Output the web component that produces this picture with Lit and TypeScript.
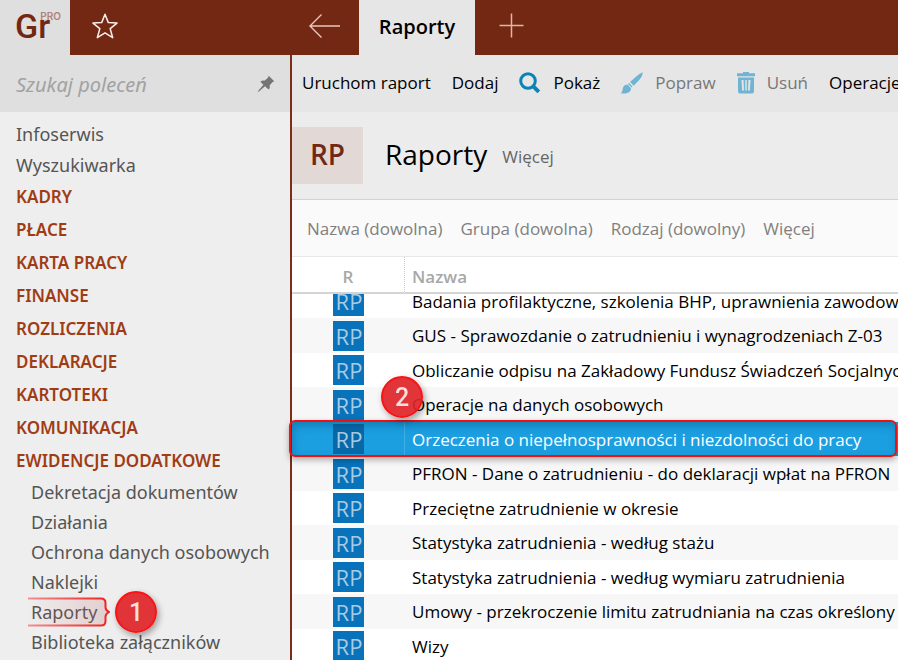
import { LitElement, html, css, svg } from "lit";
import { customElement } from "lit/decorators.js";
import { classMap } from "lit/directives/class-map.js";

const star = svg`<svg width="26" height="26" viewBox="0 0 26 26" fill="none" stroke="#fbeee9" stroke-width="1.5" stroke-linejoin="round"><path d="M13 1.3l3.3 8.3 8.7.5-6.8 5.6 2.5 9L13 19.8l-7.7 4.9 2.5-9L1 10.1l8.7-.5z"/></svg>`;
const back = svg`<svg width="32" height="26" viewBox="0 0 32 26" fill="none" stroke="#eac6bd" stroke-width="1.4"><path d="M31 13H1M12.500 1.500L1 13l11.500 11.500"/></svg>`;
const plus = svg`<svg width="25" height="25" viewBox="0 0 25 25" fill="none" stroke="#e0b5aa" stroke-width="1.500"><path d="M12.500 .5v24M.5 12.500h24"/></svg>`;
const pin = svg`<svg width="18" height="18" viewBox="0 0 18 18" fill="#757575"><path d="M11.700 .8L17.200 6.300 15.700 6.900 12.700 10.200Q13.400 13 11.600 14.500L8 11.200 2.200 16.300.6 17.200 1.500 15.600 6.400 9.700 3.400 6.700Q5.200 5 7.900 5.500L11.100 2.400z"/></svg>`;
const search = svg`<svg width="22" height="22" viewBox="0 0 22 22" fill="none" stroke="#0a84b8"><circle cx="9" cy="9" r="7.300" stroke-width="3"/><path d="M14.300 14.300L19.800 19.800" stroke-width="4"/></svg>`;
const brush = svg`<svg width="22" height="22" viewBox="0 0 22 22" fill="#6fb4d2"><path d="M21.500 .2Q22.200 3.600 18 8.200L12.700 13.700 9.100 10.100 14.600 5Q18.800 1.200 21.500.2zM8.100 11L11.500 14.400 10.600 15.500 7 12zM6.300 12.500L9.800 15.900Q10.600 18.900 7.500 20.400 4.600 21.700 0 21.600 1.500 19.500 1.700 17 2.200 12.800 6.300 12.500z"/></svg>`;
const bin = svg`<svg width="18" height="22" viewBox="0 0 18 22" fill="#6fb4d2"><path d="M0 1.300h6V0h6v1.300h6v3H0zM1 5.600h16V19q0 2.600-2.600 2.600H3.600Q1 21.600 1 19z"/><path fill="#e6e6e6" d="M4.500 8h2l.5 10.500H5.200zM8.300 8h1.400v10.500H8.300zM11.500 8h2l-.7 10.500H11z"/></svg>`;
const brace = svg`<svg width="82" height="30" viewBox="0 0 82 30" fill="none"><defs><linearGradient id="line"><stop offset="0" stop-color="#f02020" stop-opacity=".45"/><stop offset="1" stop-color="#f02020"/></linearGradient><linearGradient id="wash"><stop offset="0" stop-color="#d85050" stop-opacity="0"/><stop offset="1" stop-color="#b06060" stop-opacity=".22"/></linearGradient></defs><path fill="url(#wash)" stroke="url(#line)" stroke-width="2" d="M0 1.500H73Q77.500 1.500 77.500 6V10.500Q77.500 13 81 15 77.500 17 77.500 19.500V24Q77.500 28.500 73 28.500H0"/></svg>`;

const commands = [
  { label: "Uruchom raport" },
  { label: "Dodaj" },
  { label: "Pokaż", icon: search },
  { label: "Popraw", icon: brush, disabled: true },
  { label: "Usuń", icon: bin, disabled: true },
  { label: "Operacje" },
];
const sections = ["KADRY", "PŁACE", "KARTA PRACY", "FINANSE", "ROZLICZENIA", "DEKLARACJE", "KARTOTEKI", "KOMUNIKACJA", "EWIDENCJE DODATKOWE"];
const records = ["Dekretacja dokumentów", "Działania", "Ochrona danych osobowych", "Naklejki", "Raporty", "Biblioteka załączników"];
const filters = ["Nazwa (dowolna)", "Grupa (dowolna)", "Rodzaj (dowolny)", "Więcej"];
const reports = [
  "Badania profilaktyczne, szkolenia BHP, uprawnienia zawodowe",
  "GUS - Sprawozdanie o zatrudnieniu i wynagrodzeniach Z-03",
  "Obliczanie odpisu na Zakładowy Fundusz Świadczeń Socjalnych",
  "Operacje na danych osobowych",
  "Orzeczenia o niepełnosprawności i niezdolności do pracy",
  "PFRON - Dane o zatrudnieniu - do deklaracji wpłat na PFRON",
  "Przeciętne zatrudnienie w okresie",
  "Statystyka zatrudnienia - według stażu",
  "Statystyka zatrudnienia - według wymiaru zatrudnienia",
  "Umowy - przekroczenie limitu zatrudniania na czas określony",
  "Wizy",
];

@customElement("side-nav")
class SideNav extends LitElement {
  static styles = css`
    :host { display: flex; flex-direction: column; box-sizing: border-box; background: #eee; border-right: 2px solid #7a2e18; overflow: hidden; font-family: "Noto Sans", "Open Sans", sans-serif; }
    .search { display: flex; align-items: center; flex: none; height: 57px; padding: 0 15px 0 16px; background: #dfdfdf; }
    .box { flex: 1; min-width: 0; border: 0; padding: 2px 0 0; outline: 0; background: none; color: #444; font: italic 20px "Noto Sans", sans-serif; }
    .box::placeholder { color: #a2a2a2; opacity: 1; }
    .pin { display: flex; border: 0; padding: 0; background: none; }
    .menu { padding-top: 6px; }
    .item { display: flex; align-items: center; height: 31px; padding-left: 16px; color: #555; font-size: 18px; text-decoration: none; white-space: nowrap; }
    .section { height: 33px; color: #a03c14; font-size: 17px; font-weight: 600; }
    .record { height: 30px; padding-left: 31px; }
    .wrap { position: relative; }
    .brace { position: absolute; left: 28px; top: 0; display: flex; pointer-events: none; }
    .badge { position: absolute; left: 115px; top: -6px; }
  `;
  render() {
    return html`
      <div class="search">
        <input class="box" type="search" aria-label="Szukaj poleceń" placeholder="Szukaj poleceń" />
        <button class="pin" aria-label="Przypnij">${pin}</button>
      </div>
      <nav class="menu">
        <a class="item" href="#">Infoserwis</a>
        <a class="item" href="#">Wyszukiwarka</a>
        ${sections.map((s) => html`<a class="item section" href="#">${s}</a>`)}
        ${records.map((r) => html`<div class="wrap">
          ${r === "Raporty" ? html`<span class="brace">${brace}</span><step-badge class="badge">1</step-badge>` : ""}
          <a class="item record" href="#">${r}</a>
        </div>`)}
      </nav>`;
  }
}

@customElement("step-badge")
class StepBadge extends LitElement {
  static styles = css`
    :host { display: flex; align-items: center; justify-content: center; box-sizing: border-box; width: 42px; height: 42px; border: 2px solid #f81414; border-radius: 50%; background: rgba(222, 36, 40, .92); color: #f8dede; font: 500 25px Roboto, sans-serif; box-shadow: 2px 3px 6px rgba(0, 0, 0, .35); z-index: 3; }
  `;
  render() {
    return html`<slot></slot>`;
  }
}

@customElement("report-list")
class ReportList extends LitElement {
  static styles = css`
    :host { display: block; overflow: hidden; background: #fff; }
    .list { width: 100%; table-layout: fixed; border-collapse: separate; border-spacing: 0; }
    .head { position: sticky; top: 0; z-index: 1; height: 37px; box-sizing: border-box; padding: 3px 0 0; background: #fff; border-bottom: 2px solid #d4d4d4; color: #a8a8a8; font-size: 17px; font-weight: 600; }
    .kind { width: 112px; text-align: center; }
    .title { text-align: left; padding-left: 7px; border-left: 1px dotted #ccc; }
    .cell { height: 34px; padding: 0; white-space: nowrap; overflow: hidden; font-size: 17px; color: #000; }
    .even .cell { height: 35px; background: #f7f7f7; }
    .name { padding-left: 8px; }
    .selected .cell { background: #1b9fe1; color: #fff; }
    .selected .name { box-shadow: inset 1px 0 #43afe7; }
    .tile { display: flex; align-items: center; justify-content: center; box-sizing: border-box; width: 31px; height: 30px; margin: 0 auto; padding: 0 0 0 2px; overflow: hidden; background: #0873ba; color: #a9cbe3; font-size: 22px; line-height: 30px; }
    .selected .tile { background: #0869a8; }
  `;
  firstUpdated() {
    this.scrollTop = 10;
  }
  render() {
    return html`<table class="list">
      <thead><tr><th class="head kind">R</th><th class="head title">Nazwa</th></tr></thead>
      <tbody>${reports.map((name, i) => html`
        <tr class=${classMap({ even: i % 2 === 1, selected: i === 4 })}>
          <td class="cell"><div class="tile">RP</div></td>
          <td class="cell name">${name}</td>
        </tr>`)}</tbody>
    </table>`;
  }
}

@customElement("app-root")
class AppRoot extends LitElement {
  static styles = css`
    :host { display: flex; flex-direction: column; height: 100vh; overflow: hidden; font-family: "Open Sans", "Noto Sans", sans-serif; background: #fff; }
    button { border: 0; padding: 0; background: none; font: inherit; color: inherit; white-space: nowrap; }
    .top { display: flex; flex: none; height: 55px; background: #722812; }
    .logo { display: flex; flex: none; box-sizing: border-box; width: 70px; padding-left: 15px; background: #dfdfdf; color: #722812; }
    .mark { font: 500 34px/53px Roboto, sans-serif; }
    .edition { margin-left: -10px; padding-top: 10px; font: 600 10px/12px Inter, sans-serif; color: #b08377; }
    .tools { display: flex; flex: none; justify-content: space-between; align-items: center; box-sizing: border-box; width: 289px; padding: 0 18px 3px 22px; }
    .tools button, .add { display: flex; align-items: center; }
    .tab { width: 116px; padding-bottom: 3px; background: #e6e6e6; color: #000; font-size: 20px; font-weight: 600; }
    .add { margin-left: 24px; padding-bottom: 4px; }
    .body { display: grid; grid-template-columns: 292px minmax(0, 1fr); flex: 1; min-height: 0; }
    .main { position: relative; display: flex; flex-direction: column; min-width: 0; min-height: 0; }
    .commands { display: flex; flex: none; align-items: center; gap: 21px; box-sizing: border-box; height: 57px; padding: 0 0 2px 10px; overflow: hidden; background: #e6e6e6; font-size: 17px; }
    .command { display: flex; flex: none; align-items: center; gap: 12px; color: #000; }
    .command:disabled { color: #777; }
    .heading { display: flex; flex: none; align-items: center; height: 87px; background: #ececec; border-bottom: 1px solid #d2d2d2; }
    .code { width: 71px; height: 57px; background: #e2d9d7; color: #722812; font-size: 28px; font-weight: 600; line-height: 54px; text-align: center; }
    .name { margin: 0 15px 0 22px; padding-bottom: 4px; font-size: 28px; font-weight: 400; }
    .more { padding-top: 2px; color: #666; font-size: 17px; }
    .filters { display: flex; flex: none; align-items: center; gap: 18px; height: 56px; padding-left: 15px; background: #fafafa; border-bottom: 1px solid #e8e8e8; color: #808080; font-size: 17px; }
    .list { flex: 1; min-height: 0; }
    .frame { position: absolute; left: -3px; right: 1px; top: 365px; height: 37px; box-sizing: border-box; border: 2px solid #ee1111; border-radius: 6px; box-shadow: 0 3px 6px rgba(0, 0, 0, .3), inset 2px 4px 8px rgba(0, 50, 90, .3); pointer-events: none; z-index: 2; }
    .badge { position: absolute; left: 89px; top: 321px; }
  `;
  render() {
    return html`
      <header class="top">
        <div class="logo"><span class="mark">Gr</span><span class="edition">PRO</span></div>
        <div class="tools">
          <button aria-label="Ulubione">${star}</button>
          <button aria-label="Wstecz">${back}</button>
        </div>
        <button class="tab">Raporty</button>
        <button class="add" aria-label="Nowa karta">${plus}</button>
      </header>
      <div class="body">
        <side-nav></side-nav>
        <main class="main">
          <div class="commands">
            ${commands.map((c) => html`<button class="command" ?disabled=${c.disabled}>${c.icon ?? ""}${c.label}</button>`)}
          </div>
          <div class="heading">
            <div class="code">RP</div>
            <h1 class="name">Raporty</h1>
            <button class="more">Więcej</button>
          </div>
          <div class="filters">${filters.map((f) => html`<button>${f}</button>`)}</div>
          <report-list class="list"></report-list>
          <div class="frame"></div>
          <step-badge class="badge">2</step-badge>
        </main>
      </div>`;
  }
}
